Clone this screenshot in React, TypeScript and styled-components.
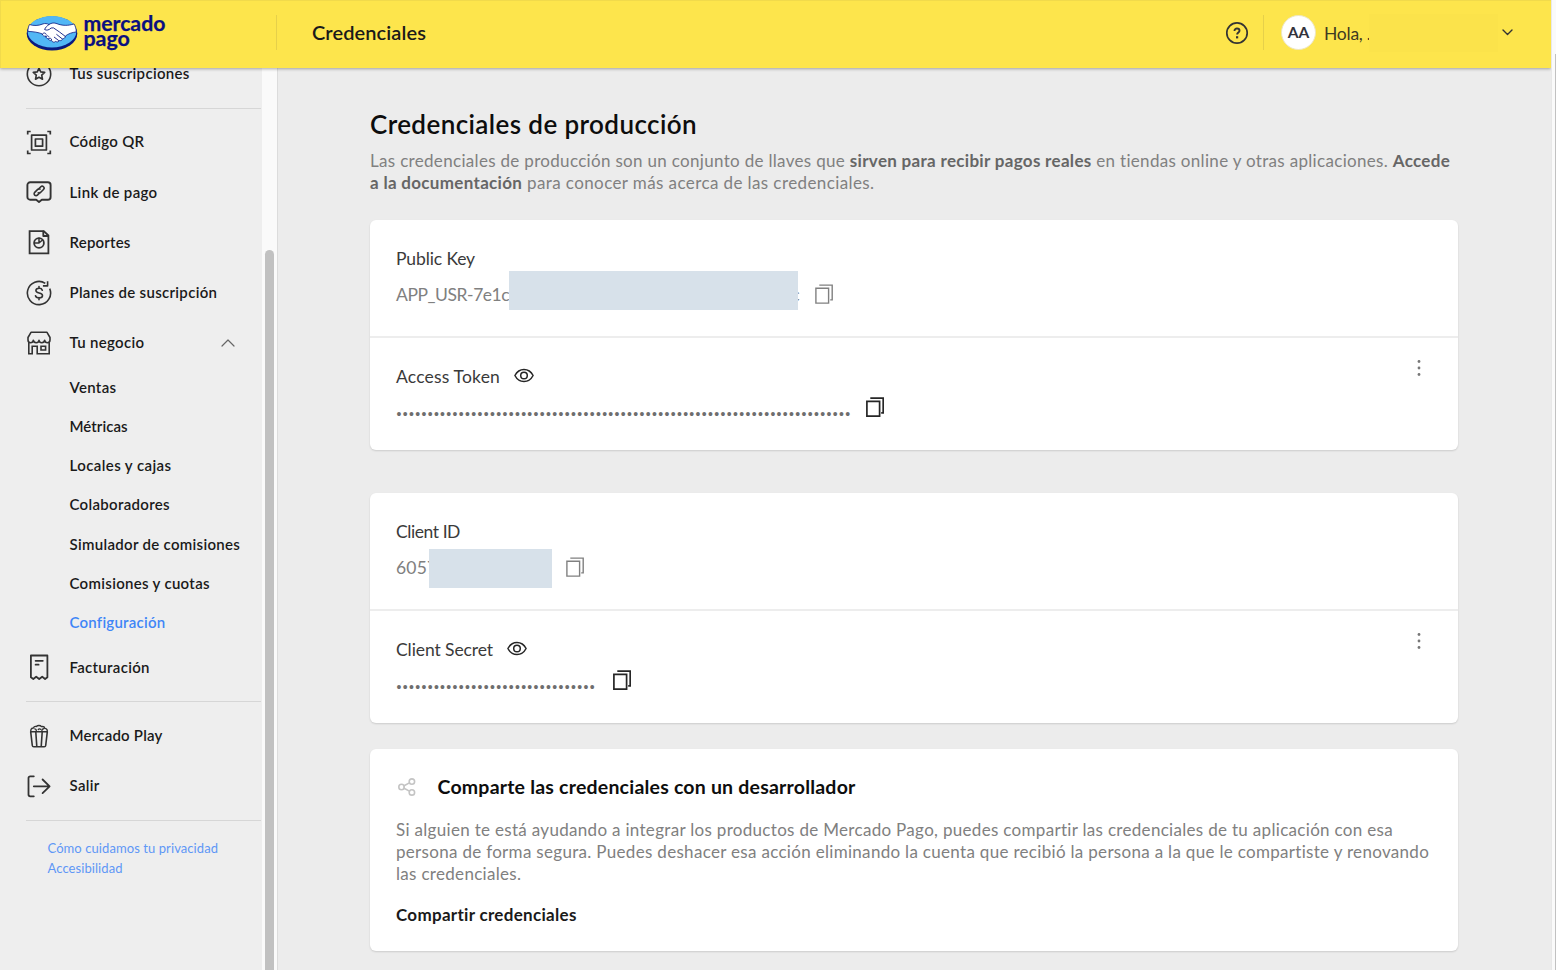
import React from "react";
import styled, { createGlobalStyle } from "styled-components";

const GlobalStyle = createGlobalStyle`
  *, *::before, *::after { box-sizing: border-box; }
  html, body { margin: 0; padding: 0; }
  body {
    font-family: Lato, "Open Sans", sans-serif;
    letter-spacing: 0.3px;
    color: #1a1a1a;
    background: #ececec;
    overflow: hidden;
  }
  svg { display: block; flex: none; }
`;

const Shell = styled.div`
  display: flex;
  width: 1556px;
  height: 970px;
  overflow: hidden;
`;

const Page = styled.div`
  display: flex;
  flex: none;
  flex-direction: column;
  width: 1551px;
  height: 970px;
  overflow: hidden;
`;

const WindowTrack = styled.div`
  flex: 1;
  display: flex;
  justify-content: flex-end;
  padding-top: 54px;
  background: #fafafa;
  border-left: 1px solid #e8e8e8;
`;

const WindowThumb = styled.div`
  width: 1px;
  background: #c1c1c1;
`;

/* ---------- header ---------- */

const Header = styled.header`
  position: relative;
  z-index: 2;
  display: flex;
  align-items: center;
  flex: none;
  height: 68px;
  padding: 0 38px 4px 25px;
  background: #fde54c;
  border-top: 1px solid #f1da4b;
  border-left: 1px solid #f1da4b;
  box-shadow: 0 1px 3px rgba(0, 0, 0, 0.32);
`;

const LogoSlot = styled.div`
  width: 250px;
`;

const HeaderRule = styled.div`
  width: 1px;
  height: 35px;
  background: #e6d04a;
`;

const HeaderTitle = styled.h1`
  flex: 1;
  margin: 0 0 0 35px;
  padding-bottom: 2px;
  font-size: 20px;
  font-weight: 600;
  letter-spacing: 0.1px;
  line-height: 24px;
`;

const HelpButton = styled.div`
  margin-right: 14px;
`;

const Avatar = styled.div`
  display: flex;
  align-items: center;
  justify-content: center;
  width: 35px;
  height: 35px;
  margin: 0 8px 0 17px;
  padding-bottom: 1px;
  border: 1px solid #eee6c0;
  border-radius: 50%;
  background: #fff;
  color: #33333b;
  font-size: 15.5px;
  font-weight: 700;
  letter-spacing: 0;
`;

const Greeting = styled.div`
  width: 45px;
  padding-top: 2px;
  color: #3f3b22;
  font-size: 17.5px;
  letter-spacing: -0.25px;
  line-height: 24px;
  white-space: nowrap;
`;

const NamePatch = styled.div`
  width: 129px;
  height: 38px;
  margin-right: 4px;
  background: #fbe34b;
`;

/* ---------- sidebar ---------- */

const Body = styled.div`
  display: flex;
  flex: 1;
  min-height: 0;
  overflow: hidden;
`;

const Sidebar = styled.aside`
  display: flex;
  width: 278px;
  background: #eeeeee;
  border-right: 1px solid #dcdcdc;
`;

const Nav = styled.nav`
  width: 262px;
  margin-top: -19px;
  padding-left: 26px;
`;

const ScrollTrack = styled.div`
  width: 15px;
  padding: 182px 3px 0 3px;
  background: #fafafa;
`;

const ScrollThumb = styled.div`
  height: 740px;
  border-radius: 5px;
  background: #c1c1c1;
`;

const NavItem = styled.a`
  display: flex;
  align-items: center;
  height: 50.2px;
  padding-bottom: 1px;
  font-size: 15px;
  font-weight: 600;
  svg { margin-right: 17.5px; }
`;

const NavLabel = styled.span<{ $spacing?: number }>`
  flex: 1;
  padding-bottom: 1px;
  white-space: nowrap;
  letter-spacing: ${(p) => p.$spacing ?? 0.3}px;
`;

const SubItem = styled.a<{ $active?: boolean; $spacing?: number }>`
  display: flex;
  align-items: center;
  height: 39.2px;
  padding: 0 0 2px 43.5px;
  font-size: 15px;
  font-weight: 600;
  letter-spacing: ${(p) => p.$spacing ?? 0.31}px;
  color: ${(p) => (p.$active ? "#3f86f7" : "#1a1a1a")};
`;

const NavRule = styled.div`
  height: 1px;
  margin: 8.6px 1px 8.6px 0;
  background: #d6d6d6;
`;

const Legal = styled.div`
  display: flex;
  flex-direction: column;
  padding: 8px 0 0 21.5px;
`;

const LegalLink = styled.a`
  color: #5e97f6;
  font-size: 13px;
  letter-spacing: 0.08px;
  line-height: 20px;
`;

/* ---------- content ---------- */

const Main = styled.main`
  flex: 1;
  padding: 40px 93px 0 92px;
  background: #ececec;
`;

const Heading = styled.h2`
  margin: 0;
  font-size: 26px;
  font-weight: 600;
  letter-spacing: 0.4px;
  line-height: 32px;
  color: #0d0d0d;
`;

const Intro = styled.p`
  margin: 10px 0 0;
  color: #808080;
  font-size: 17px;
  letter-spacing: 0.315px;
  line-height: 22px;
  white-space: nowrap;
  b { color: #666; font-weight: 700; }
`;

const IntroEnd = styled.span`
  letter-spacing: 0.4px;
`;

const Card = styled.section<{ $gap: number }>`
  margin-top: ${(p) => p.$gap}px;
  border-radius: 6px;
  background: #fff;
  box-shadow: 0 1px 2px rgba(0, 0, 0, 0.14);
`;

const Row = styled.div<{ $height: number }>`
  position: relative;
  height: ${(p) => p.$height}px;
  padding: 27px 26px 0 26px;
  & + & { border-top: 2px solid #ededed; }
`;

const FieldName = styled.div<{ $spacing: number }>`
  display: flex;
  align-items: center;
  height: 22px;
  color: #3a3a3a;
  font-size: 17.5px;
  letter-spacing: ${(p) => p.$spacing}px;
  svg { margin-left: 13.5px; }
`;

const Value = styled.div`
  display: flex;
  align-items: center;
  height: 39px;
  margin-top: 1px;
  color: #808080;
  font-size: 17.5px;
`;

const ValueText = styled.span<{ $spacing: number; $width: number }>`
  width: ${(p) => p.$width}px;
  padding-top: 9px;
  white-space: nowrap;
  letter-spacing: ${(p) => p.$spacing}px;
`;

const Redaction = styled.span<{ $width: number; $drop: number }>`
  position: relative;
  z-index: 1;
  flex: none;
  width: ${(p) => p.$width}px;
  height: 39px;
  margin-top: ${(p) => p.$drop}px;
  background: #d7e1ea;
`;

const Tail = styled.span`
  width: 2px;
  padding-top: 9px;
  direction: rtl;
  overflow: hidden;
`;

const CopySlot = styled.span<{ $left: number; $up?: number }>`
  margin: ${(p) => p.$up ?? 9}px 0 0 ${(p) => p.$left}px;
`;

const Dots = styled.span`
  color: #6e6e6e;
  font-family: "Liberation Sans", sans-serif;
  font-size: 14px;
  letter-spacing: 1.33px;
  line-height: 16px;
  margin: 13px 0 0 0.5px;
`;

const KebabSlot = styled.div`
  position: absolute;
  top: 20px;
  right: 36px;
`;

const ShareCard = styled(Card)`
  height: 202px;
  padding: 25px 26px 0;
`;

const ShareTitle = styled.h3`
  display: flex;
  align-items: center;
  height: 25px;
  margin: 0;
  color: #0d0d0d;
  font-size: 19.5px;
  font-weight: 700;
  letter-spacing: 0.21px;
  svg { margin-right: 20.5px; }
`;

const ShareText = styled.p`
  margin: 20px 0 0;
  color: #808080;
  font-size: 17px;
  letter-spacing: 0.31px;
  line-height: 21.8px;
  white-space: nowrap;
`;

const ShareAction = styled.a`
  display: block;
  margin-top: 19px;
  font-size: 17px;
  font-weight: 700;
  line-height: 24px;
`;

/* ---------- drawings ---------- */

const Glyph = styled.svg<{ $weight?: number; $tone?: string }>`
  fill: none;
  stroke: ${(p) => p.$tone ?? "#333"};
  stroke-width: ${(p) => p.$weight ?? 1.6};
  stroke-linecap: round;
  stroke-linejoin: round;
`;

const Fill = styled.path`
  fill: #333;
  stroke: none;
`;

const NavIcon = ({ children, weight }: { children: React.ReactNode; weight?: number }) => (
  <Glyph width="26" height="26" viewBox="0 0 26 26" $weight={weight}>{children}</Glyph>
);

const StarIcon = () => (
  <NavIcon>
    <circle cx="13" cy="13" r="11.7" />
    <path d="M13 7.2l1.7 3.7 4 .5-3 2.8.8 4-3.5-2-3.5 2 .8-4-3-2.8 4-.5z" />
  </NavIcon>
);
const QrIcon = () => (
  <NavIcon weight={1.7}>
    <path strokeLinecap="butt" strokeLinejoin="miter" d="M1.7 5.5V2.5h3M21.3 2.5h3v3M1.7 21.5v3h3M24.3 21.5v3h-3" />
    <rect x="5.6" y="6.2" width="14.8" height="14.8" />
    <rect x="9.4" y="10" width="7.2" height="7.2" />
  </NavIcon>
);
const LinkIcon = () => (
  <NavIcon weight={1.9}>
    <path d="M4.2 3.3h17.6a2.8 2.8 0 0 1 2.8 2.8v11.8a2.8 2.8 0 0 1-2.8 2.8h-6L13 22.9l-2.8-2.2h-6a2.8 2.8 0 0 1-2.8-2.8V6.1a2.8 2.8 0 0 1 2.8-2.8z" />
    <path strokeWidth="1.6" d="M12.5 10.1l2.3-2.3a1.9 1.9 0 0 1 2.7 2.7l-3 3a1.900 1.900 0 0 1-2.3.3M13.9 13.600l-2.500 2.500a1.900 1.900 0 0 1-2.700-2.700l3-3a1.900 1.900 0 0 1 2.300-.3" />
  </NavIcon>
);
const ReportIcon = () => (
  <NavIcon weight={1.8}>
    <path strokeLinejoin="miter" d="M3.6 2.100h14.200l4.600 4.400v17.800H3.600z" />
    <path d="M17.300 2.400v4.600h4.600" />
    <circle cx="13" cy="14" r="4.9" />
    <path d="M13 9.300V14H8.600M13 14l3.500-3" strokeWidth="1.5" />
  </NavIcon>
);
const PlanIcon = () => (
  <NavIcon>
    <path d="M19.300 3.300A11.600 11.600 0 1 0 23.700 8.600M21.600 1.200v4.700h-4.700" strokeLinecap="butt" />
    <path strokeWidth="1.6" d="M16.300 10.200c-.4-1.300-1.700-1.900-3.200-1.900-1.900 0-3.200.9-3.200 2.300 0 3.300 6.600 1.500 6.600 4.900 0 1.500-1.400 2.400-3.400 2.400-1.800 0-3.200-.7-3.600-2.200M13 6.600v1.700M13 17.900v1.800" />
  </NavIcon>
);
const StoreIcon = () => (
  <NavIcon>
    <path d="M5 2.300h16l3 5.200v2.600c0 1.500-1 2.600-2.400 2.600-1.600 0-2.800-1.100-2.900-2.500-.2 1.400-1.400 2.500-2.900 2.500S13.100 11.600 13 10.200c-.1 1.400-1.300 2.500-2.800 2.500s-2.700-1.100-2.900-2.500c-.1 1.400-1.300 2.500-2.900 2.500C3 12.700 2 11.600 2 10.100V7.500z" />
    <path d="M2.800 12.700v11h3.400v-7.500h5v7.500h12v-11M15 16.200h4.600v3.800H15z" strokeLinejoin="miter" />
  </NavIcon>
);
const InvoiceIcon = () => (
  <NavIcon weight={1.8}>
    <path d="M4.900 23.300V1.500h16.500v21.800l-2.300 1.700-2.900-2.300-3 2.300-3-2.300-2.900 2.300z" />
    <path d="M9.600 6.800h7.200M9.600 10.700h3" />
  </NavIcon>
);
const PopcornIcon = () => (
  <NavIcon weight={1.6}>
    <path d="M4.700 8.800h16.600L19.700 22.500a1.500 1.500 0 0 1-1.500 1.300H7.800a1.500 1.500 0 0 1-1.500-1.300zM9.800 9l1 14.600M16.200 9l-1 14.600" />
    <path d="M4.900 8.700c-.6-2 .6-3.700 2.500-3.700.5-1.300 1.700-1.800 2.900-1.500 1.400-1.400 4-1.400 5.200.1 1.700-.4 3 .4 3.400 1.800 2 .3 2.800 1.700 2.200 3.300M8.800 5.900c1 .1 1.500.7 1.500 1.600M12.300 6.500c.6-.8 1.700-.8 2.300-.2M17.600 5.800c-1 .1-1.700.8-1.700 1.700" strokeWidth="1.4" />
  </NavIcon>
);
const ExitIcon = () => (
  <NavIcon weight={1.8}>
    <path d="M7.800 3.300H4.200A1.700 1.700 0 0 0 2.500 5v16.600a1.700 1.700 0 0 0 1.700 1.700h3.600M7.800 13.300h15.700M16.600 6.500l7 6.800-7 6.800" />
  </NavIcon>
);

const CopyIcon = ({ dark }: { dark?: boolean }) => (
  <Glyph width="18" height="20" viewBox="0 0 18 20" $weight={dark ? 1.7 : 1.4} $tone={dark ? "#262626" : "#808080"}>
    <path strokeLinejoin="miter" strokeLinecap="butt" d="M.9 4.300h12.700v14.800H.9zM4.300 1.100h12.900v14.800h-2" />
  </Glyph>
);
const EyeIcon = () => (
  <Glyph width="20" height="16" viewBox="0 0 20 16" $tone="#262626" $weight={1.5}>
    <path d="M.9 7.500C2.900 3.700 6.200 1.500 10 1.500s7.100 2.200 9.100 6c-2 3.800-5.300 6-9.100 6s-7.100-2.200-9.100-6z" />
    <circle cx="10" cy="7.5" r="3.3" />
  </Glyph>
);
const KebabIcon = () => (
  <svg width="6" height="20" viewBox="0 0 6 20" fill="#777">
    <circle cx="3" cy="3.5" r="1.4" /><circle cx="3" cy="10" r="1.4" /><circle cx="3" cy="16.5" r="1.4" />
  </svg>
);
const ShareIcon = () => (
  <Glyph width="21" height="20" viewBox="0 0 21 20" $tone="#c4c4c4" $weight={1.6}>
    <circle cx="5.5" cy="10" r="2.7" /><circle cx="15.9" cy="4.6" r="2.7" /><circle cx="15.9" cy="15.4" r="2.7" />
    <path d="M8 8.800l5.400-2.900M8 11.200l5.400 2.900" />
  </Glyph>
);

const Logo = () => (
  <svg width="142" height="42" viewBox="26 12 142 42">
    <ellipse cx="52" cy="33.5" rx="25.3" ry="17" fill="#0a1a80" />
    <ellipse cx="52" cy="31.7" rx="24.3" ry="15.7" fill="#52b7f5" />
    <path
      d="M29.500 24.500c4 1.500 9 1.300 13.500-.6 2-.7 4-.4 6 .6 2.500-1.700 5.200-2 8-.8 5 2 11 2.300 17 .2 1.500 2.400 2.300 5 2.200 8.100-4 .3-7.800 1.700-10.800 4-.1 1.900-1.300 2.800-2.700 2.600-.4 1.700-1.800 2.300-3.200 1.900-.9 1.500-2.400 1.800-3.800.9-1.400 1.300-3.500.9-4.100-.9-1.600.4-2.900-.3-3-1.900-1.700.2-2.900-.9-2.500-2.500-2 .4-3.600-.5-3.800-2.200-3.900-1.500-8.600-2.300-14.400-2.500 0-2.500.5-4.800 1.600-6.900z"
      fill="#fff" stroke="#0a1a80" strokeWidth=".8" strokeLinejoin="round"
    />
    <path
      d="M49 24.500c-2 1.300-3.600 3-4.400 5 1.900 1.200 4.500.6 6.500-1.500l2.400-.1c4 2.500 7.700 5.300 11.400 8.200M56.700 34.500l5.300 4.200M54.300 37.200l4.300 3.300M42.500 34c1-1.500 3-1.500 3.700.3M45.800 36.800c.6-1.600 2.700-1.500 3.200.2M48.900 38.900c.7-1.200 2.500-.9 2.700.8"
      fill="none" stroke="#0a1a80" strokeWidth=".9" strokeLinecap="round"
    />
    <g fill="#0a0f80" stroke="#0a0f80" strokeWidth=".25" fontFamily="Lato, sans-serif" fontWeight="700" fontSize="21" letterSpacing="0">
      <text x="83.4" y="30.6" textLength="82" lengthAdjust="spacingAndGlyphs">mercado</text>
      <text x="83.4" y="46.2" textLength="46.5" lengthAdjust="spacingAndGlyphs">pago</text>
    </g>
  </svg>
);

const HelpIcon = () => (
  <Glyph width="24" height="24" viewBox="0 0 24 24" $weight={1.7}>
    <circle cx="12" cy="12" r="10.2" />
    <path d="M9.500 9.900c0-1.500 1.100-2.400 2.500-2.400s2.500.9 2.500 2.200c0 1.700-2.400 1.900-2.400 3.700" strokeWidth="1.9" strokeLinecap="butt" />
    <Fill d="M11 15.200h2.200v2.200H11z" />
  </Glyph>
);
const Caret = ({ up }: { up?: boolean }) =>
  up ? (
    <Glyph width="14" height="8" viewBox="0 0 14 8" $tone="#666" $weight={1.2}><path d="M1 7l6-6 6 6" /></Glyph>
  ) : (
    <Glyph width="11" height="7" viewBox="0 0 11 7" $weight={1.4}><path d="M1 1l4.500 4.500L10 1" /></Glyph>
  );
const CaretSlot = styled.span`
  margin-right: 9.5px;
`;

export default function App() {
  return (
    <>
      <GlobalStyle />
      <Shell>
        <Page>
          <Header>
            <LogoSlot><Logo /></LogoSlot>
            <HeaderRule />
            <HeaderTitle>Credenciales</HeaderTitle>
            <HelpButton><HelpIcon /></HelpButton>
            <HeaderRule />
            <Avatar>AA</Avatar>
            <Greeting>Hola, .</Greeting>
            <NamePatch />
            <Caret />
          </Header>
          <Body>
            <Sidebar>
              <Nav>
                <NavItem><StarIcon /><NavLabel>Tus suscripciones</NavLabel></NavItem>
                <NavRule />
                <NavItem><QrIcon /><NavLabel>Código QR</NavLabel></NavItem>
                <NavItem><LinkIcon /><NavLabel $spacing={0.34}>Link de pago</NavLabel></NavItem>
                <NavItem><ReportIcon /><NavLabel $spacing={0.2}>Reportes</NavLabel></NavItem>
                <NavItem><PlanIcon /><NavLabel>Planes de suscripción</NavLabel></NavItem>
                <NavItem>
                  <StoreIcon />
                  <NavLabel>Tu negocio</NavLabel>
                  <CaretSlot><Caret up /></CaretSlot>
                </NavItem>
                <SubItem>Ventas</SubItem>
                <SubItem $spacing={0.05}>Métricas</SubItem>
                <SubItem $spacing={0.41}>Locales y cajas</SubItem>
                <SubItem>Colaboradores</SubItem>
                <SubItem>Simulador de comisiones</SubItem>
                <SubItem>Comisiones y cuotas</SubItem>
                <SubItem $active $spacing={0.23}>Configuración</SubItem>
                <NavItem><InvoiceIcon /><NavLabel>Facturación</NavLabel></NavItem>
                <NavRule />
                <NavItem><PopcornIcon /><NavLabel $spacing={0.22}>Mercado Play</NavLabel></NavItem>
                <NavItem><ExitIcon /><NavLabel>Salir</NavLabel></NavItem>
                <NavRule />
                <Legal>
                  <LegalLink>Cómo cuidamos tu privacidad</LegalLink>
                  <LegalLink>Accesibilidad</LegalLink>
                </Legal>
              </Nav>
              <ScrollTrack><ScrollThumb /></ScrollTrack>
            </Sidebar>
            <Main>
              <Heading>Credenciales de producción</Heading>
              <Intro>
                Las credenciales de producción son un conjunto de llaves que <b>sirven para recibir pagos reales</b> en
                tiendas online y otras aplicaciones. <b>Accede<br />a la documentación</b>
                <IntroEnd> para conocer más acerca de las credenciales.</IntroEnd>
              </Intro>
              <Card $gap={26}>
                <Row $height={116}>
                  <FieldName $spacing={-0.11}>Public Key</FieldName>
                  <Value>
                    <ValueText $spacing={-0.45} $width={113}>APP_USR-7e1c</ValueText>
                    <Redaction $width={289} $drop={2} />
                    <Tail>c</Tail>
                    <CopySlot $left={15}><CopyIcon /></CopySlot>
                  </Value>
                </Row>
                <Row $height={113.5}>
                  <FieldName $spacing={0.18}>Access Token<EyeIcon /></FieldName>
                  <Value>
                    <Dots>{"•".repeat(73)}</Dots>
                    <CopySlot $left={15} $up={-2}><CopyIcon dark /></CopySlot>
                  </Value>
                  <KebabSlot><KebabIcon /></KebabSlot>
                </Row>
              </Card>
              <Card $gap={43.5}>
                <Row $height={116}>
                  <FieldName $spacing={-0.43}>Client ID</FieldName>
                  <Value>
                    <ValueText $spacing={0.2} $width={33}>6057</ValueText>
                    <Redaction $width={123} $drop={12} />
                    <CopySlot $left={14}><CopyIcon /></CopySlot>
                  </Value>
                </Row>
                <Row $height={113.5}>
                  <FieldName $spacing={-0.09}>Client Secret<EyeIcon /></FieldName>
                  <Value>
                    <Dots>{"•".repeat(32)}</Dots>
                    <CopySlot $left={17} $up={-2}><CopyIcon dark /></CopySlot>
                  </Value>
                  <KebabSlot><KebabIcon /></KebabSlot>
                </Row>
              </Card>
              <ShareCard $gap={26.5}>
                <ShareTitle><ShareIcon />Comparte las credenciales con un desarrollador</ShareTitle>
                <ShareText>
                  Si alguien te está ayudando a integrar los productos de Mercado Pago, puedes compartir las credenciales de tu aplicación con esa
                  <br />
                  persona de forma segura. Puedes deshacer esa acción eliminando la cuenta que recibió la persona a la que le compartiste y renovando
                  <br />
                  las credenciales.
                </ShareText>
                <ShareAction>Compartir credenciales</ShareAction>
              </ShareCard>
            </Main>
          </Body>
        </Page>
        <WindowTrack><WindowThumb /></WindowTrack>
      </Shell>
    </>
  );
}
